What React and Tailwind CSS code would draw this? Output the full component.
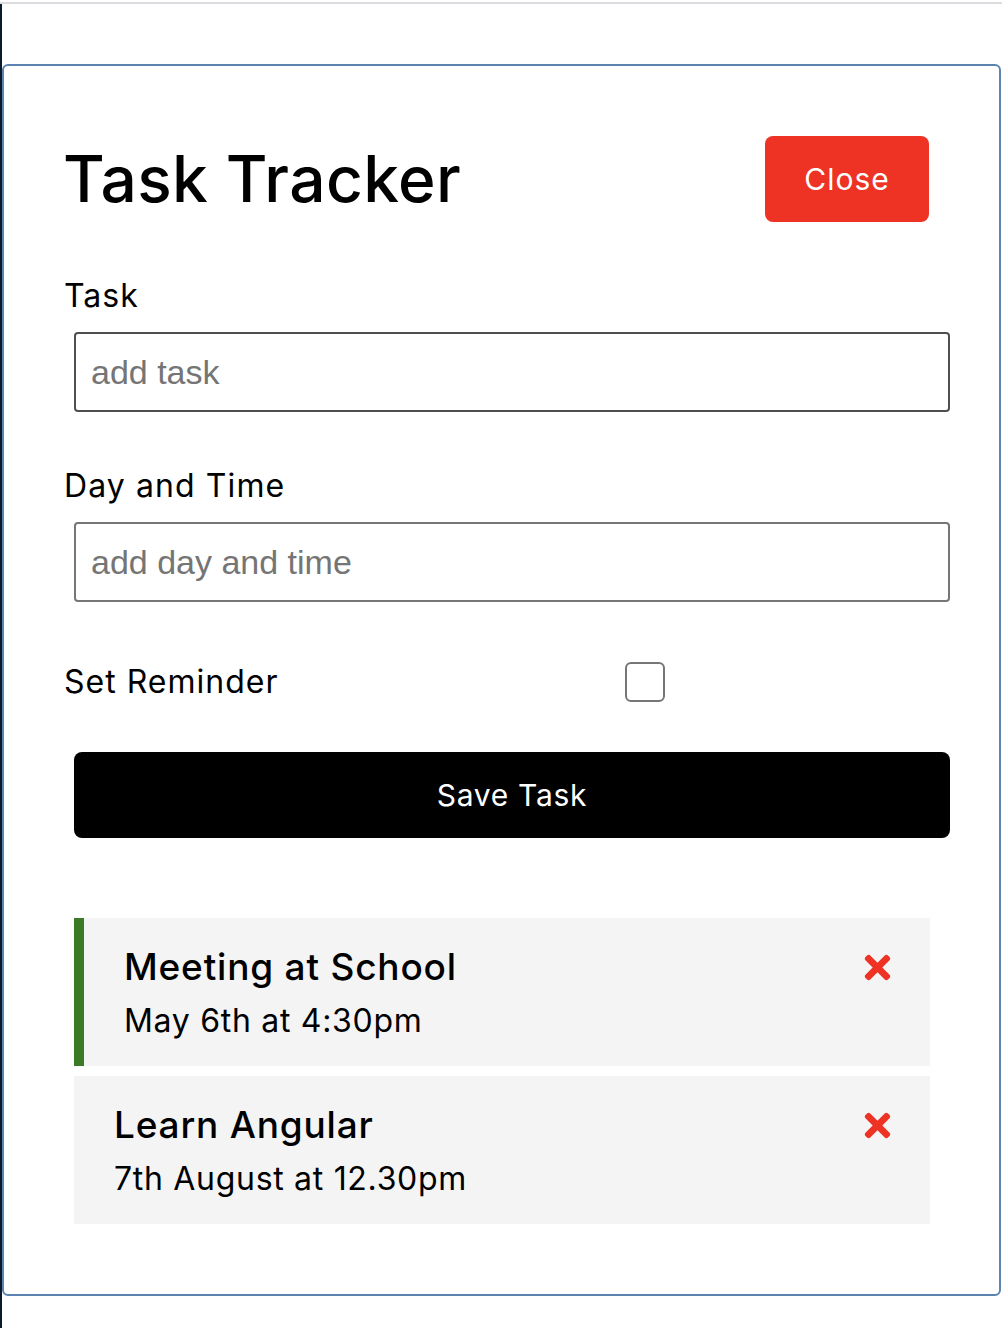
import { FaTimes } from "react-icons/fa";

const tasks = [
  { id: 1, text: "Meeting at School", day: "May 6th at 4:30pm", reminder: true },
  { id: 2, text: "Learn Angular", day: "7th August at 12.30pm", reminder: false },
];

const fontStack = "font-['Inter','Noto_Sans',sans-serif]";

const Task = ({ task }) => (
  <div
    className={`ml-[10px] w-[856px] bg-[#f4f4f4] py-[20px] pr-[40px] ${
      task.reminder ? "border-l-[10px] border-[#3b7b25] pl-[40px]" : "pl-[40px]"
    }`}
  >
    <h3 className="flex items-center justify-between text-[37px] font-medium leading-[58px] text-black">
      <span className="tracking-[0.8px]">{task.text}</span>
      <FaTimes className="-mr-[6px] text-[#ee3224]" />
    </h3>
    <p className="text-[32px] leading-[50px] tracking-[0.7px] text-black">{task.day}</p>
  </div>
);

export default function App() {
  return (
    <div className={`min-h-screen bg-white ${fontStack}`}>
      <div className="mt-[2px] h-[2px] bg-[#dcdce0]" />
      <div className="flex">
        <div className="w-[2px] shrink-0 bg-[#0c1a2b]" />
        <div className="min-w-0 flex-1 pr-[1px] pt-[60px] pb-[33px]">
          <div className="rounded-[6px] border-2 border-[#5b84b1] px-[60px] pt-[60px] pb-[70px]">
            <header className="flex h-[106px] items-center justify-between">
              <h1 className="-ml-[1px] text-[64px] font-medium tracking-[0.4px] text-black">
                Task Tracker
              </h1>
              <button className="mr-[10px] h-[86px] w-[164px] shrink-0 rounded-[8px] bg-[#ee3224] text-[30px] tracking-[1px] text-white">
                Close
              </button>
            </header>

            <form className="mt-[40px] flex flex-col">
              <label className="text-[32px] leading-[48px] tracking-[1px] text-black">Task</label>
              <input
                type="text"
                placeholder="add task"
                className="ml-[10px] mt-[12px] h-[80px] w-[876px] shrink-0 rounded-[4px] border-2 border-[#4f4f4f] px-[15px] font-['Liberation_Sans',Arial,sans-serif] text-[34px] tracking-normal placeholder:text-[#757575] focus:outline-none"
              />

              <label className="mt-[50px] text-[32px] leading-[48px] tracking-[1.1px] text-black">
                Day and Time
              </label>
              <input
                type="text"
                placeholder="add day and time"
                className="ml-[10px] mt-[12px] h-[80px] w-[876px] shrink-0 rounded-[4px] border-2 border-[#767676] px-[15px] font-['Liberation_Sans',Arial,sans-serif] text-[34px] tracking-normal placeholder:text-[#757575] focus:outline-none"
              />

              <div className="mt-[56px] flex h-[48px] items-center">
                <label className="flex-1 text-[32px] tracking-[1px] text-black">Set Reminder</label>
                <div className="flex flex-[2] justify-center">
                  <div className="-ml-[4px] h-[40px] w-[40px] rounded-[6px] border-2 border-[#767676] bg-white" />
                </div>
              </div>

              <button
                type="button"
                className="ml-[10px] mt-[46px] h-[86px] w-[876px] shrink-0 rounded-[8px] bg-black text-[30px] tracking-[0.7px] text-white"
              >
                Save Task
              </button>
            </form>

            <div className="mt-[80px] flex flex-col gap-[10px]">
              {tasks.map((task) => (
                <Task key={task.id} task={task} />
              ))}
            </div>
          </div>
        </div>
      </div>
    </div>
  );
}
